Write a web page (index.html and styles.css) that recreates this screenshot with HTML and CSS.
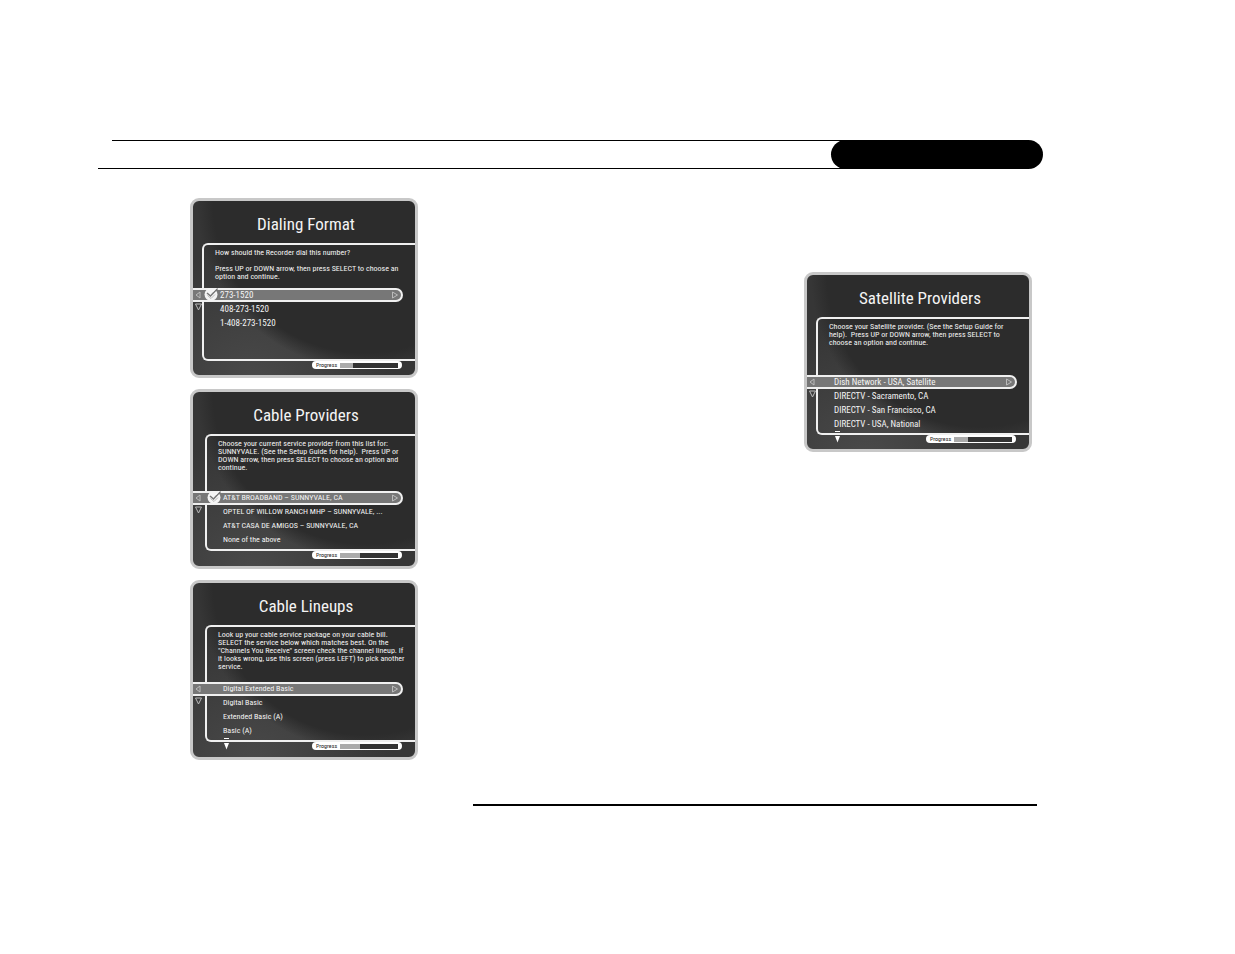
FILE: index.html
```html
<!DOCTYPE html>
<html lang="en">
<head>
<meta charset="utf-8">
<title>Setup Guide</title>
<link rel="stylesheet" href="styles.css">
</head>
<body>
<svg class="sprite" aria-hidden="true">
  <symbol id="left" viewBox="0 0 6 8"><path d="M5 1 1 4l4 3z" fill="none" stroke="currentColor"/></symbol>
  <symbol id="right" viewBox="0 0 8 8"><path d="M1.500 1 6.500 4l-5 3z" fill="none" stroke="currentColor"/></symbol>
  <symbol id="down" viewBox="0 0 7 8"><path d="M.5 1h6L3.500 7z" fill="none" stroke="currentColor"/></symbol>
  <symbol id="more" viewBox="0 0 7 12"><path d="M1 .5h5" stroke="#fff"/><path d="M1 5h5L3.500 11.500z" fill="#fff"/></symbol>
  <symbol id="check" viewBox="0 0 15 14"><circle cx="7" cy="7.500" r="6.500" fill="#f4f4f4"/><path d="M3 6 6.500 9 13.500 1.500" fill="none" stroke="#777" stroke-width="1.500"/><path d="M3.500 8.500 7 11.500 11 7.500" fill="none" stroke="#bbb"/><path d="M8.500 5 12.500 1" stroke="#fff"/></symbol>
</svg>
<header class="page-head">
  <div class="rules"></div>
  <div class="tab"></div>
</header>
<main class="content">
  <div class="column">
    <section class="screen">
      <h2 class="title">Dialing Format</h2>
      <div class="frame">
        <div class="message short"><p>How should the Recorder dial this number?</p><p class="spaced">Press UP or DOWN arrow, then press SELECT to choose an<br>option and continue.</p></div>
        <ul class="options">
          <li><button class="option selected" type="button"><svg class="go-left"><use href="#left"/></svg><svg class="tick"><use href="#check"/></svg>273-1520<svg class="go-right"><use href="#right"/></svg><svg class="go-down"><use href="#down"/></svg></button></li>
          <li><button class="option" type="button">408-273-1520</button></li>
          <li><button class="option" type="button">1-408-273-1520</button></li>
        </ul>
      </div>
      <div class="foot"><label class="progress">Progress<progress max="100" value="22"></progress></label></div>
    </section>
    <section class="screen wide-inset">
      <h2 class="title">Cable Providers</h2>
      <div class="frame">
        <div class="message"><p>Choose your current service provider from this list for:<br>SUNNYVALE. (See the Setup Guide for help).&nbsp; Press UP or<br>DOWN arrow, then press SELECT to choose an option and<br>continue.</p></div>
        <ul class="options">
          <li><button class="option selected" type="button"><svg class="go-left"><use href="#left"/></svg><svg class="tick"><use href="#check"/></svg>AT&amp;T BROADBAND – SUNNYVALE, CA<svg class="go-right"><use href="#right"/></svg><svg class="go-down"><use href="#down"/></svg></button></li>
          <li><button class="option" type="button">OPTEL OF WILLOW RANCH MHP – SUNNYVALE, ...</button></li>
          <li><button class="option" type="button">AT&amp;T CASA DE AMIGOS – SUNNYVALE, CA</button></li>
          <li><button class="option" type="button">None of the above</button></li>
        </ul>
      </div>
      <div class="foot"><label class="progress">Progress<progress max="100" value="35"></progress></label></div>
    </section>
    <section class="screen wide-inset">
      <h2 class="title">Cable Lineups</h2>
      <div class="frame">
        <div class="message"><p>Look up your cable service package on your cable bill.<br>SELECT the service below which matches best. On the<br>"Channels You Receive" screen check the channel lineup. If<br>it looks wrong, use this screen (press LEFT) to pick another<br>service.</p></div>
        <ul class="options">
          <li><button class="option selected" type="button"><svg class="go-left"><use href="#left"/></svg>Digital Extended Basic<svg class="go-right"><use href="#right"/></svg><svg class="go-down"><use href="#down"/></svg></button></li>
          <li><button class="option" type="button">Digital Basic</button></li>
          <li><button class="option" type="button">Extended Basic (A)</button></li>
          <li><button class="option" type="button">Basic (A)</button></li>
        </ul>
      </div>
      <div class="foot"><svg class="more"><use href="#more"/></svg><label class="progress">Progress<progress max="100" value="35"></progress></label></div>
    </section>
  </div>
  <div class="column side">
    <section class="screen">
      <h2 class="title">Satellite Providers</h2>
      <div class="frame">
        <div class="message"><p>Choose your Satellite provider. (See the Setup Guide for<br>help).&nbsp; Press UP or DOWN arrow, then press SELECT to<br>choose an option and continue.</p></div>
        <ul class="options">
          <li><button class="option selected" type="button"><svg class="go-left"><use href="#left"/></svg>Dish Network - USA, Satellite<svg class="go-right"><use href="#right"/></svg><svg class="go-down"><use href="#down"/></svg></button></li>
          <li><button class="option" type="button">DIRECTV - Sacramento, CA</button></li>
          <li><button class="option" type="button">DIRECTV - San Francisco, CA</button></li>
          <li><button class="option" type="button">DIRECTV - USA, National</button></li>
        </ul>
      </div>
      <div class="foot"><svg class="more"><use href="#more"/></svg><label class="progress">Progress<progress max="100" value="24"></progress></label></div>
    </section>
  </div>
</main>
<hr class="bottom-rule">
</body>
</html>
```
FILE: styles.css
```css
* { box-sizing: border-box; }
body { margin: 0; background: #fff; color: #f4f4f4; font-family: "Roboto Condensed", Roboto, sans-serif; }
.sprite { display: none; }
.page-head { display: flex; margin: 140px 192px 0 98px; }
.rules { flex: 1; height: 29px; margin-right: -16px; border-bottom: 1px solid #000; }
.rules::before { content: ""; display: block; margin-left: 14px; border-top: 1px solid #000; }
.tab { width: 212px; height: 29px; border-radius: 15px; background: #000; }
.content { display: flex; justify-content: space-between; align-items: flex-start; padding: 29px 203px 0 190px; }
.column { display: flex; flex-direction: column; gap: 11px; width: 228px; }
.side { padding-top: 74px; }
.screen {
  --inset: 9px;
  --option-size: 9px;
  min-height: 180px;
  border: 3px solid #c8c8c8;
  border-radius: 9px;
  background:
    radial-gradient(circle at 172px 0, #2c2c2c 0 152px, transparent 168px),
    radial-gradient(circle at 60px 185px, #4a4a4a, #363636 140px);
}
.wide-inset { --inset: 12px; --option-size: 8px; }
.title { height: 42px; margin: 0; padding: 11px 0 0 4px; font-size: 17px; line-height: 24px; font-weight: 400; text-align: center; }
.frame { min-height: 118px; margin-left: var(--inset); border: 2px solid #f0f0f0; border-right: 0; border-radius: 6px 0 0 6px; }
.wide-inset .frame { min-height: 117px; }
.message { min-height: 56px; padding: 4px 0 0 11px; font-size: 8px; line-height: 8px; white-space: nowrap; }
.wide-inset .message { min-height: 55px; }
.short { min-height: 43px; }
.message p { margin: 0; }
.message .spaced { margin-top: 8px; }
.options { margin: 0; padding: 0; list-style: none; }
.option { display: block; height: 14px; padding: 0 0 0 16px; border: 0; background: none; color: inherit; font-family: inherit; font-size: var(--option-size); line-height: 14px; text-align: left; white-space: nowrap; }
.selected {
  position: relative;
  width: calc(100% + var(--inset) - 10px);
  margin-left: calc(-2px - var(--inset));
  padding-left: calc(18px + var(--inset));
  border: solid #f0f0f0;
  border-width: 2px 2px 2px 0;
  border-radius: 0 7px 7px 0;
  background: #777;
  line-height: 10px;
}
.go-left, .go-right, .go-down, .tick { position: absolute; color: #bbb; }
.go-left { left: 2px; top: 1px; width: 6px; height: 8px; }
.go-right { right: 2px; top: 1px; width: 8px; height: 8px; }
.go-down { left: 2px; top: 13px; width: 7px; height: 8px; }
.tick { left: calc(var(--inset) + 2px); top: -3px; width: 15px; height: 14px; }
.foot { display: flex; align-items: flex-start; padding: 0 13px 0 calc(18px + var(--inset)); }
.more { width: 7px; height: 12px; margin-top: -4px; }
.progress { display: flex; align-items: center; justify-content: space-between; width: 90px; height: 8px; margin-left: auto; padding: 0 4px; border-radius: 4px; background: #fff; color: #222; font-size: 6px; line-height: 8px; }
progress { appearance: none; width: 58px; height: 5px; border: 0; background: #333; }
progress::-webkit-progress-bar { background: #333; }
progress::-webkit-progress-value { background: #aaa; }
.bottom-rule { margin: 44px 198px 0 473px; border: 0; border-top: 2px solid #000; }
```
